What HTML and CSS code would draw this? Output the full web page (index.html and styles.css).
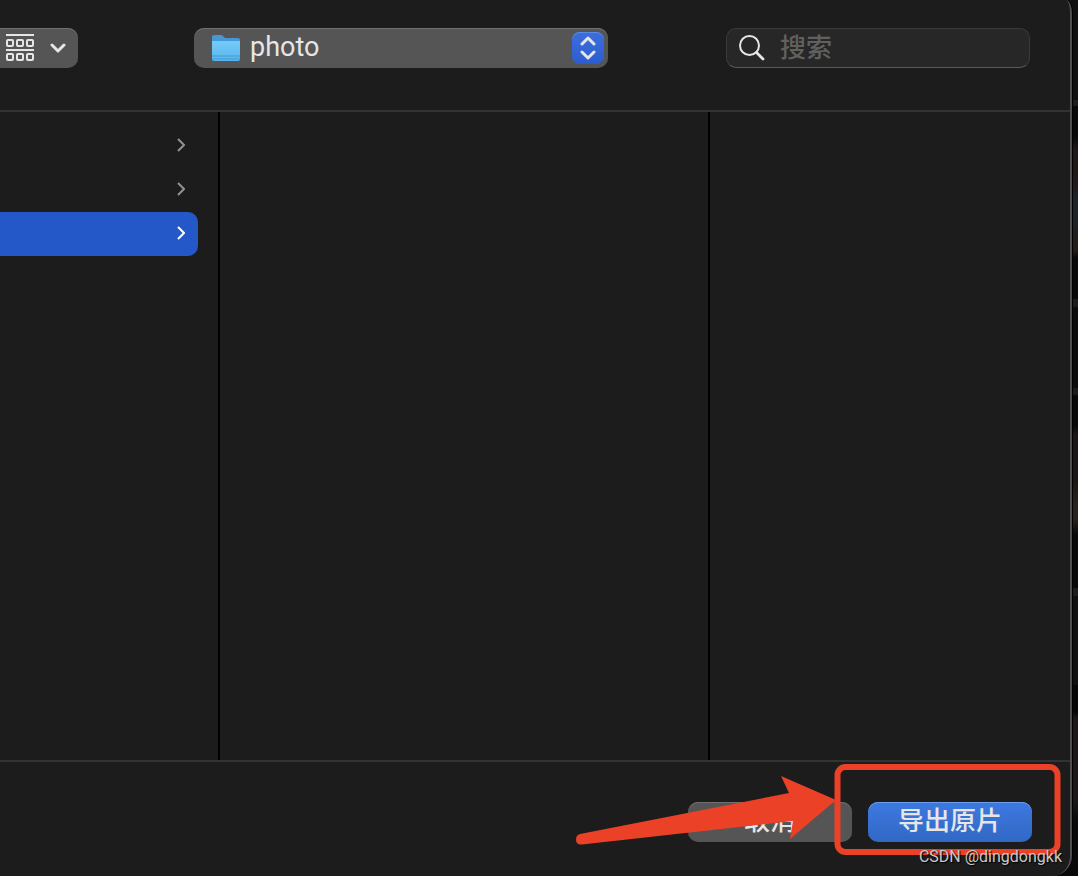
FILE: index.html
```html
<!DOCTYPE html>
<html lang="zh-CN">
<head>
<meta charset="utf-8">
<meta name="viewport" content="width=device-width, initial-scale=1">
<title>导出原片</title>
<link rel="stylesheet" href="styles.css">
</head>
<body>
<main class="dialog">
  <header class="toolbar">
    <button class="view-button" type="button" aria-label="显示方式">
      <svg class="view-icon" width="28" height="28" viewBox="0 0 28 28" fill="none" stroke="currentColor" stroke-width="2" aria-hidden="true">
        <path d="M0 1h28M0 16h28"/>
        <rect x="1" y="6" width="6" height="6" rx="1"/><rect x="11" y="6" width="6" height="6" rx="1"/><rect x="21" y="6" width="6" height="6" rx="1"/>
        <rect x="1" y="20" width="6" height="6" rx="1"/><rect x="11" y="20" width="6" height="6" rx="1"/><rect x="21" y="20" width="6" height="6" rx="1"/>
      </svg>
      <svg width="16" height="10" viewBox="0 0 16 10" fill="none" stroke="currentColor" stroke-width="3" stroke-linecap="round" stroke-linejoin="round" aria-hidden="true"><path d="M2 2l6 6 6-6"/></svg>
    </button>
    <div class="folder-picker">
      <select class="folder-select" aria-label="文件夹"><option>photo</option></select>
      <svg class="folder-icon" width="30" height="28" viewBox="0 0 30 28" aria-hidden="true">
        <defs><linearGradient id="folder-front" x1="0" y1="0" x2="0" y2="1"><stop offset="0" stop-color="#75cbfa"/><stop offset="1" stop-color="#59b5ed"/></linearGradient></defs>
        <path d="M1 3q0-2 2-2h7q1 0 2 1l2 2h13q2 0 2 2v8H1z" fill="#4499d5"/>
        <path d="M1 7h28v18q0 2-2 2H3q-2 0-2-2z" fill="url(#folder-front)"/>
        <path d="M1 22h28M1 25h28" stroke="#419bd6" stroke-width="1"/>
      </svg>
      <span class="stepper" aria-hidden="true">
        <svg width="16" height="24" viewBox="0 0 16 24" fill="none" stroke="currentColor" stroke-width="3" stroke-linecap="round" stroke-linejoin="round"><path d="M2 8l6-6 6 6M2 16l6 6 6-6"/></svg>
      </span>
    </div>
    <label class="search">
      <svg width="26" height="26" viewBox="0 0 26 26" fill="none" stroke="currentColor" stroke-linecap="round" aria-hidden="true"><circle cx="10.500" cy="10.500" r="9.500" stroke-width="2"/><path d="M17.500 17.500l6.500 6.500" stroke-width="2.800"/></svg>
      <input class="search-input" type="search" placeholder="搜索" aria-label="搜索">
    </label>
  </header>

  <section class="columns" aria-label="文件浏览">
    <div class="column rows">
      <button class="row" type="button" aria-label="展开文件夹"><svg width="8" height="14" viewBox="0 0 8 14" fill="none" stroke="currentColor" stroke-width="2" aria-hidden="true"><path d="M1 1l6 6-6 6"/></svg></button>
      <button class="row" type="button" aria-label="展开文件夹"><svg width="8" height="14" viewBox="0 0 8 14" fill="none" stroke="currentColor" stroke-width="2" aria-hidden="true"><path d="M1 1l6 6-6 6"/></svg></button>
      <button class="row selected" type="button" aria-label="展开文件夹"><svg width="8" height="14" viewBox="0 0 8 14" fill="none" stroke="currentColor" stroke-width="2" aria-hidden="true"><path d="M1 1l6 6-6 6"/></svg></button>
    </div>
    <div class="column"></div>
    <div></div>
  </section>

  <footer class="footer">
    <button class="action cancel" type="button">取消</button>
    <button class="action export" type="button">导出原片</button>
    <svg class="annotation" width="496" height="96" viewBox="570 762 496 96" aria-hidden="true">
      <path d="M580 834L789 793 781 776 836 800 790 839 793 821 582 844.500Q576 845 576 839.500Q576 835 580 834Z" fill="#eb4127"/>
      <rect x="837.500" y="767" width="220" height="85" rx="8" fill="none" stroke="#eb4127" stroke-width="6"/>
    </svg>
    <span class="watermark">CSDN @dingdongkk</span>
  </footer>
</main>
</body>
</html>
```
FILE: styles.css
```css
* { box-sizing: border-box; }

body {
  margin: 0;
  padding-right: 6px;
  background: linear-gradient(#101010 0 100px, #1c1c1c 100px 106px, #080808 106px 136px, #201816 150px 180px, #1b222b 198px 220px, #241c17 235px 250px, #080808 258px 299px, #1c1c1c 299px 307px, #0c0c0c 307px 388px, #1c1c1c 388px 395px, #090909 395px 425px, #1d1515 435px 480px, #29211c 505px 520px, #080808 535px 588px, #1c1c1c 588px 596px, #101010 596px 685px, #060606 685px 712px, #1c1717 718px 800px, #090909 820px);
  color: #e6e6e6;
  font-family: Roboto, "Noto Sans CJK SC", sans-serif;
  overflow: hidden;
}

button, input, select { font: inherit; }

.dialog {
  display: flex;
  flex-direction: column;
  min-height: 100vh;
  background: #1c1c1c;
  border-right: 2px solid #4e4e4e;
  border-radius: 0 6px 20px 0 / 0 14px 20px 0;
  box-shadow: 1px 0 0 #000;
}

.toolbar {
  display: flex;
  align-items: flex-start;
  height: 112px;
  padding: 28px 40px 0 0;
  border-bottom: 2px solid #333;
}

.view-button {
  display: flex;
  align-items: center;
  gap: 16px;
  width: 78px;
  height: 40px;
  margin-right: 116px;
  padding: 0 12px 0 6px;
  border: 0;
  border-radius: 0 10px 10px 0;
  background: #555;
  box-shadow: inset 0 1px #707070;
  color: #e6e6e6;
}

.view-button svg { flex: none; }

.folder-picker {
  position: relative;
  flex: 1;
  min-width: 160px;
  margin-right: 118px;
}

.folder-select {
  display: block;
  width: 100%;
  height: 40px;
  padding: 0 48px 2px 56px;
  border: 0;
  border-radius: 10px;
  appearance: none;
  background: #555;
  box-shadow: inset 0 1px #707070;
  color: #e6e6e6;
  font-size: 27px;
}

.folder-icon {
  position: absolute;
  top: 6px;
  left: 17px;
  pointer-events: none;
}

.stepper {
  position: absolute;
  top: 4px;
  right: 4px;
  display: grid;
  place-items: center;
  width: 32px;
  height: 32px;
  border-radius: 8px;
  background: linear-gradient(#3c6fdc, #2b5dce);
  box-shadow: inset 0 1px #5c89e3;
  pointer-events: none;
}

.search {
  display: flex;
  align-items: center;
  gap: 15px;
  width: 304px;
  height: 40px;
  padding: 0 14px 0 12px;
  border: 1px solid #3a3a3a;
  border-bottom-color: #5a5a5a;
  border-radius: 10px;
  background: #272727;
}

.search svg { flex: none; }

.search-input {
  flex: 1;
  min-width: 0;
  height: 38px;
  padding: 0;
  border: 0;
  outline: 0;
  background: none;
  color: #e6e6e6;
  font-size: 26px;
  font-weight: 500;
}

.search-input::placeholder { color: #606060; }

.columns {
  display: grid;
  grid-template-columns: 220px 490px 1fr;
  flex: 1;
}

.column { border-right: 2px solid #000; }

.rows { padding: 12px 20px 0 0; }

.row {
  display: flex;
  align-items: center;
  justify-content: flex-end;
  width: 100%;
  height: 44px;
  padding: 0 13px 2px 0;
  border: 0;
  border-radius: 0 10px 10px 0;
  background: none;
  color: #929292;
}

.row.selected {
  background: #2458c9;
  color: #fff;
}

.footer {
  position: relative;
  display: flex;
  justify-content: flex-end;
  gap: 16px;
  height: 116px;
  padding: 40px 38px 0 0;
  border-top: 2px solid #333;
}

.action {
  width: 164px;
  height: 40px;
  padding: 0 0 2px;
  border: 0;
  border-radius: 10px;
  color: #e6e6e6;
  font-size: 26px;
  font-weight: 500;
  line-height: 38px;
}

.cancel {
  background: #555;
  box-shadow: inset 0 1px #707070;
}

.export {
  background: linear-gradient(#3c79e0, #3268c5);
  box-shadow: inset 0 1px #6c9ced;
}

.annotation {
  position: absolute;
  top: 0;
  right: 4px;
  pointer-events: none;
}

.watermark {
  position: absolute;
  right: 8px;
  bottom: 8px;
  color: #c8c8c8;
  font-size: 16px;
  line-height: 22px;
  text-shadow: 1px 1px 1px #000;
}
```
